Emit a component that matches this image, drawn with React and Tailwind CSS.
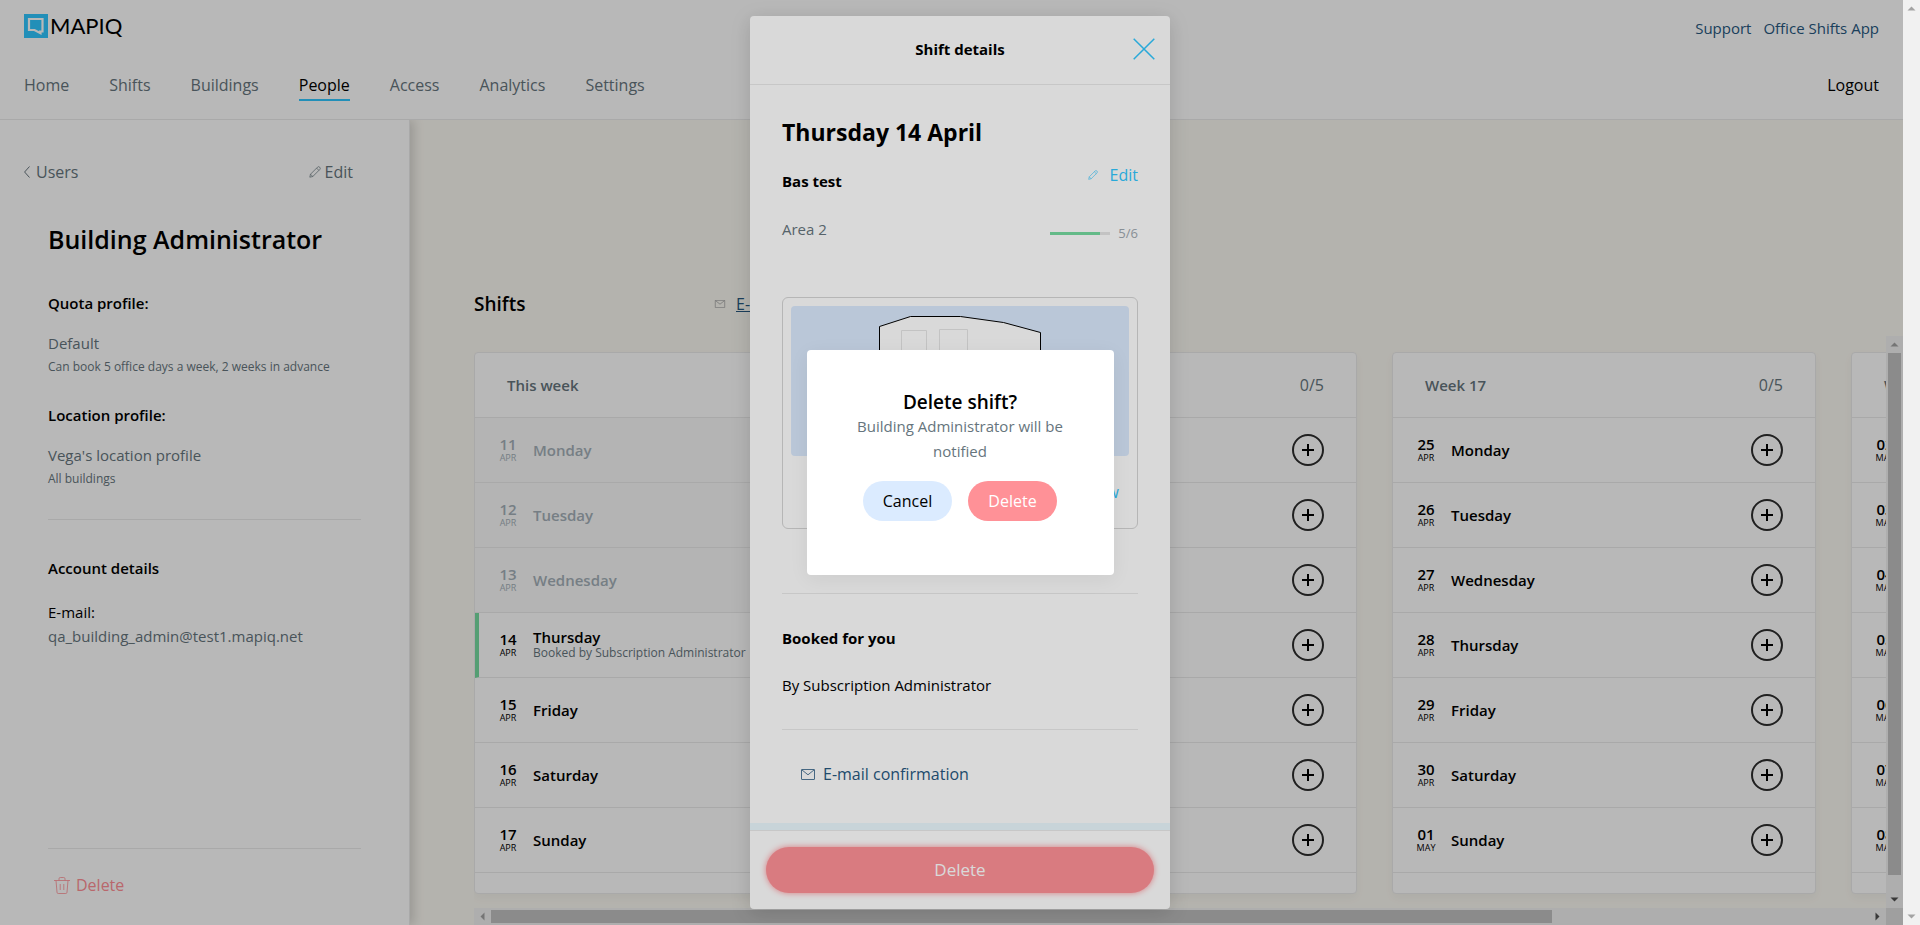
const cn = (...parts) => parts.filter(Boolean).join(' ');

function PencilIcon({ className }) {
  return (
    <svg viewBox="0 0 12 12" className={className} fill="none" stroke="currentColor" strokeWidth="0.7" strokeLinejoin="round" aria-hidden="true">
      <path d="M0.8 11.2 L1.5 8.2 L8.6 1.1 Q9.6 0.1 10.7 1.2 Q11.8 2.3 10.9 3.4 L3.8 10.5 Z" />
      <path d="M7.6 2.1 L9.9 4.4 M1.5 8.2 L3.8 10.5" />
    </svg>
  );
}

function MailIcon({ className }) {
  return (
    <svg viewBox="0 0 14 11" className={className} fill="none" stroke="currentColor" strokeWidth="0.8" aria-hidden="true">
      <rect x="0.5" y="0.5" width="13" height="10" rx="0.4" />
      <path d="M0.8 0.8 L7 5.8 L13.2 0.8" />
    </svg>
  );
}

function TrashIcon({ className }) {
  return (
    <svg viewBox="0 0 16 17" className={className} fill="none" stroke="currentColor" strokeWidth="0.8" aria-hidden="true">
      <path d="M0 3.5 H16 M5 3.5 V1.8 Q5 0.5 6.3 0.5 H9.7 Q11 0.5 11 1.8 V3.5" />
      <path d="M2 3.5 L3 15.3 Q3.1 16.5 4.2 16.5 H11.8 Q12.9 16.5 13 15.3 L14 3.5" />
      <path d="M6.2 7 V13 M9.8 7 V13" />
    </svg>
  );
}

function Logo() {
  return (
    <a href="#home" className="flex items-center gap-0.5">
      <svg viewBox="0 0 24 24" className="h-6 w-6" aria-hidden="true">
        <rect width="24" height="24" fill="#31c7ff" />
        <path d="M5 5 H18.5 V17.5 H15 M5 4 V16 H10.5 L16.5 19.2 V17" fill="none" stroke="#fff" strokeWidth="2.2" />
      </svg>
      <span className="font-['Lato',sans-serif] text-[22px] leading-6">MAPIQ</span>
    </a>
  );
}

const ARROWS = {
  up: 'M4.5 10.5 L8.5 6.5 L12.5 10.5 Z',
  down: 'M4.5 6.5 L8.5 10.5 L12.5 6.5 Z',
  left: 'M10.5 4.5 L6.5 8.5 L10.5 12.5 Z',
  right: 'M6.5 4.5 L10.5 8.5 L6.5 12.5 Z',
};

function ArrowButton({ dir, faded }) {
  return (
    <button type="button" aria-label={`Scroll ${dir}`} className="h-[17px] w-[17px] shrink-0">
      <svg viewBox="0 0 17 17" className={cn('h-[17px] w-[17px]', faded ? 'text-[#a3a3a3]' : 'text-[#505050]')} aria-hidden="true">
        <path d={ARROWS[dir]} fill="currentColor" />
      </svg>
    </button>
  );
}

const NAV = ['Home', 'Shifts', 'Buildings', 'People', 'Access', 'Analytics', 'Settings'];

function Header() {
  return (
    <header className="flex flex-col border-b border-[#eaeaea] bg-white px-6 pt-3.5 pb-[18px]">
      <div className="flex items-start justify-between">
        <Logo />
        <div className="flex gap-3 pt-0.5 text-[15px] text-[#27587f]">
          <a href="#support">Support</a>
          <a href="#app">Office Shifts App</a>
        </div>
      </div>
      <div className="mt-8 flex items-start justify-between pt-px">
        <nav className="flex gap-10">
          {NAV.map((n) => (
            <a
              key={n}
              href={`#${n.toLowerCase()}`}
              className={cn('border-b-2 pb-0.5', n === 'People' ? 'border-[#31c7ff] text-black' : 'border-transparent text-[#66757d]')}
            >
              {n}
            </a>
          ))}
        </nav>
        <button type="button">Logout</button>
      </div>
    </header>
  );
}

function Profile({ label, value, note }) {
  return (
    <>
      <h2 className="text-[15px] font-semibold">{label}</h2>
      <p className="mt-4 text-[15px] text-[#66757d]">{value}</p>
      <p className="text-xs leading-6 text-[#66757d]">{note}</p>
    </>
  );
}

function Sidebar() {
  return (
    <aside className="z-10 flex w-[410px] shrink-0 flex-col border-r border-[#eaeaea] bg-white px-12 pt-10 pb-7 shadow-[4px_0_10px_rgba(0,0,0,0.15)]">
      <div className="-ml-6 flex items-center justify-between pr-2 text-[#66757d]">
        <a href="#users" className="flex items-center gap-1.5">
          <svg viewBox="0 0 6 12" className="h-3 w-1.5" fill="none" stroke="currentColor" aria-hidden="true">
            <path d="M5.5 0.5 L0.6 6 L5.5 11.5" />
          </svg>
          Users
        </a>
        <button type="button" className="flex items-center gap-1">
          <PencilIcon className="h-3 w-3" />
          Edit
        </button>
      </div>
      <h1 className="mt-[39px] text-[25px] leading-8 font-semibold">Building Administrator</h1>
      <div className="mt-9">
        <Profile label="Quota profile:" value="Default" note="Can book 5 office days a week, 2 weeks in advance" />
      </div>
      <div className="mt-6">
        <Profile label="Location profile:" value="Vega's location profile" note="All buildings" />
      </div>
      <hr className="mt-7 border-[#eaeaea]" />
      <h2 className="mt-9 text-[15px] font-semibold">Account details</h2>
      <p className="mt-5 text-[15px]">E-mail:</p>
      <p className="text-[15px] text-[#66757d]">qa_building_admin@test1.mapiq.net</p>
      <hr className="mt-auto border-[#eaeaea]" />
      <button type="button" className="mt-6 flex items-center gap-1.5 self-start pl-1.5 text-[#ff8f96]">
        <TrashIcon className="h-[17px] w-4" />
        Delete
      </button>
    </aside>
  );
}

const DAY_NAMES = ['Monday', 'Tuesday', 'Wednesday', 'Thursday', 'Friday', 'Saturday', 'Sunday'];
const WEEKS = [
  { title: 'This week', used: '1/5', dates: ['11 APR', '12 APR', '13 APR', '14 APR', '15 APR', '16 APR', '17 APR'], past: 3, booked: 3, noAdd: true },
  { title: 'Week 16', used: '0/5', dates: ['18 APR', '19 APR', '20 APR', '21 APR', '22 APR', '23 APR', '24 APR'], past: 0 },
  { title: 'Week 17', used: '0/5', dates: ['25 APR', '26 APR', '27 APR', '28 APR', '29 APR', '30 APR', '01 MAY'], past: 0 },
  { title: 'Week 18', used: '0/5', dates: ['02 MAY', '03 MAY', '04 MAY', '05 MAY', '06 MAY', '07 MAY', '08 MAY'], past: 0 },
];

function DayRow({ name, date, past, booked, addable }) {
  const [num, month] = date.split(' ');
  return (
    <li
      className={cn(
        'flex h-[65px] items-center border-b border-[#eaeaea] pr-8',
        booked ? 'border-l-4 border-l-[#76dba0] pl-5' : 'pl-6',
        past ? 'bg-[#f9f9f9] text-[#a4b0b8]' : 'bg-white',
      )}
    >
      <div className="flex w-[18px] flex-col items-center">
        <span className="text-[15px] leading-4 font-semibold">{num}</span>
        <span className="text-[9px] leading-3">{month}</span>
      </div>
      <div className="ml-4 flex flex-1 flex-col">
        <span className="text-[15px] leading-4 font-semibold">{name}</span>
        {booked && <span className="text-xs leading-4 text-[#66757d]">Booked by Subscription Administrator</span>}
      </div>
      {addable && (
        <button type="button" aria-label={`Add shift on ${name} ${date}`} className="flex h-8 w-8 items-center justify-center rounded-full border-2 border-[#2d2d2d]">
          <svg viewBox="0 0 12 12" className="h-3 w-3" stroke="#000" strokeWidth="2" aria-hidden="true">
            <path d="M6 0 V12 M0 6 H12" />
          </svg>
        </button>
      )}
    </li>
  );
}

function WeekCard({ week }) {
  return (
    <section className="w-[424px] shrink-0 rounded border border-[#eaeaea] bg-white pb-5 shadow-[0_4px_10px_rgba(0,0,0,0.04)]">
      <div className="flex h-16 items-center justify-between px-8 text-[#66757d]">
        <h3 className="text-[15px] font-semibold">{week.title}</h3>
        <span>{week.used}</span>
      </div>
      <ul className="border-t border-[#eaeaea]">
        {week.dates.map((d, i) => (
          <DayRow key={d} name={DAY_NAMES[i]} date={d} past={i < week.past} booked={i === week.booked} addable={!week.noAdd} />
        ))}
      </ul>
    </section>
  );
}

function Shifts() {
  return (
    <main className="flex min-w-0 flex-1 flex-col bg-[#faf8f1] pt-[172px] pl-16">
      <div className="flex items-center">
        <h2 className="w-60 text-[19px] leading-6 font-semibold">Shifts</h2>
        <a href="#mail" className="flex items-center gap-2.5 whitespace-nowrap text-[#27587f] underline">
          <MailIcon className="h-2 w-3 text-[#85888a]" />
          E-mail confirmation
        </a>
      </div>
      <div className="mt-5 flex min-h-0 flex-1">
        <div className="flex min-w-0 flex-1 flex-col">
          <div className="flex min-h-0 flex-1 items-start gap-[35px] overflow-hidden pt-4">
            {WEEKS.map((w) => (
              <WeekCard key={w.title} week={w} />
            ))}
          </div>
          <div className="flex h-[17px] shrink-0 items-center bg-[#f1f1f1]">
            <ArrowButton dir="left" faded />
            <div className="flex-1">
              <div className="h-[13px] w-[77%] bg-[#c1c1c1]" />
            </div>
            <ArrowButton dir="right" />
          </div>
        </div>
        <div className="flex w-[17px] flex-col">
          <div className="flex min-h-0 flex-1 flex-col items-center bg-[#f1f1f1]">
            <ArrowButton dir="up" faded />
            <div className="min-h-0 flex-1">
              <div className="h-[97%] w-[13px] bg-[#c1c1c1]" />
            </div>
            <ArrowButton dir="down" />
          </div>
          <div className="h-[17px] bg-[#dcdcdc]" />
        </div>
      </div>
    </main>
  );
}

function FloorPlan() {
  return (
    <div className="flex h-[150px] justify-center overflow-hidden rounded-sm bg-[#dbeafe]">
      <svg viewBox="0 0 338 150" className="h-[150px] w-[338px]" aria-hidden="true">
        <path d="M88.5 140 V20.5 L119.5 10.5 H169.5 L212.5 16.5 L249.5 26.5 V140 Z" fill="#fff" stroke="#000" />
        <path d="M110.5 100 V24.5 H135.5 V100 Z M148.5 100 V23.5 H176.5 V100 Z" fill="none" stroke="#e6e6e6" />
      </svg>
    </div>
  );
}

function ShiftPanel() {
  return (
    <div className="absolute inset-0 flex justify-center p-4">
      <div className="flex w-[420px] flex-col overflow-hidden rounded bg-white shadow-[0_4px_20px_rgba(0,0,0,0.15)]" role="dialog" aria-label="Shift details">
        <div className="grid h-[69px] shrink-0 grid-cols-[52px_1fr_52px] items-center border-b border-[#eaeaea] pb-0.5">
          <h2 className="col-start-2 text-center text-[15px] font-bold">Shift details</h2>
          <button type="button" aria-label="Close" className="flex justify-center">
            <svg viewBox="0 0 22 22" className="h-[22px] w-[22px]" stroke="#31c7ff" strokeWidth="1.5" aria-hidden="true">
              <path d="M0.7 0.7 L21.3 21.3 M21.3 0.7 L0.7 21.3" />
            </svg>
          </button>
        </div>
        <div className="flex min-h-0 flex-1 flex-col overflow-hidden px-8 pt-[31px]">
          <h3 className="text-[23px] leading-8 font-bold">Thursday 14 April</h3>
          <div className="mt-[15px] flex items-start justify-between">
            <h4 className="pt-1.5 text-[15px] font-bold">Bas test</h4>
            <button type="button" className="flex items-center gap-3 text-[#31c7ff]">
              <PencilIcon className="h-2.5 w-2.5" />
              Edit
            </button>
          </div>
          <div className="mt-6 flex items-end justify-between">
            <p className="text-[15px] text-[#66757d]">Area 2</p>
            <div className="flex items-center gap-2">
              <div className="h-[3px] w-[60px] bg-[#e6e6e6]" role="progressbar" aria-label="Area occupancy" aria-valuemin={0} aria-valuemax={6} aria-valuenow={5}>
                <div className="h-[3px] w-5/6 bg-[#76dba0]" />
              </div>
              <span className="text-[13px] leading-4 text-[#a0a8b0]">5/6</span>
            </div>
          </div>
          <div className="mt-14 rounded-md border border-[#d6d6d6] p-2">
            <FloorPlan />
            <div className="mt-6 mb-4 flex justify-end pr-2.5">
              <a href="#view" className="text-[#31c7ff]">View</a>
            </div>
          </div>
          <hr className="mt-16 border-[#eaeaea]" />
          <h4 className="mt-8 text-[15px] font-bold">Booked for you</h4>
          <p className="mt-[23px] text-[15px]">By Subscription Administrator</p>
          <hr className="mt-8 border-[#eaeaea]" />
          <button type="button" className="mt-8 flex items-center gap-2 self-start pl-[19px] text-[#27587f]">
            <MailIcon className="h-[11px] w-3.5" />
            E-mail confirmation
          </button>
        </div>
        <div className="h-[7px] shrink-0 bg-[#ecf9ff]" />
        <div className="border-t border-[#eaeaea] p-4">
          <button type="button" className="h-[46px] w-full rounded-full bg-[#ff9197] text-[17px] text-white shadow-[0_0_6px_#ff9197]">
            Delete
          </button>
        </div>
      </div>
    </div>
  );
}

function ConfirmDialog() {
  return (
    <div className="absolute inset-0 flex items-center justify-center">
      <div className="flex h-[225px] w-[307px] flex-col items-center rounded bg-white px-10 pt-10 shadow-[0_4px_20px_rgba(0,0,0,0.06)]" role="alertdialog" aria-label="Delete shift?">
        <h2 className="text-[19px] leading-6 font-semibold">Delete shift?</h2>
        <p className="text-center text-[15px] leading-[25px] text-[#66757d]">Building Administrator will be notified</p>
        <div className="mt-[17px] flex gap-4">
          <button type="button" className="h-10 w-[89px] rounded-full bg-[#dbebff]">Cancel</button>
          <button type="button" className="h-10 w-[89px] rounded-full bg-[#ff9197] text-white">Delete</button>
        </div>
      </div>
    </div>
  );
}

export default function App() {
  return (
    <div className="relative flex h-screen overflow-hidden font-['Open_Sans','Noto_Sans',sans-serif] text-base leading-6 text-black">
      <div className="flex min-w-0 flex-1 flex-col">
        <Header />
        <div className="flex min-h-0 flex-1 overflow-hidden">
          <Sidebar />
          <Shifts />
        </div>
      </div>
      <div className="flex w-[17px] shrink-0 flex-col justify-between bg-[#f1f1f1]">
        <ArrowButton dir="up" faded />
        <ArrowButton dir="down" faded />
      </div>
      <div className="absolute inset-y-0 left-0 right-[17px] z-20 bg-black/15" />
      <div className="absolute inset-0 z-30">
        <ShiftPanel />
      </div>
      <div className="absolute inset-y-0 left-0 right-[17px] z-40 bg-black/15" />
      <div className="absolute inset-0 z-50">
        <ConfirmDialog />
      </div>
    </div>
  );
}
